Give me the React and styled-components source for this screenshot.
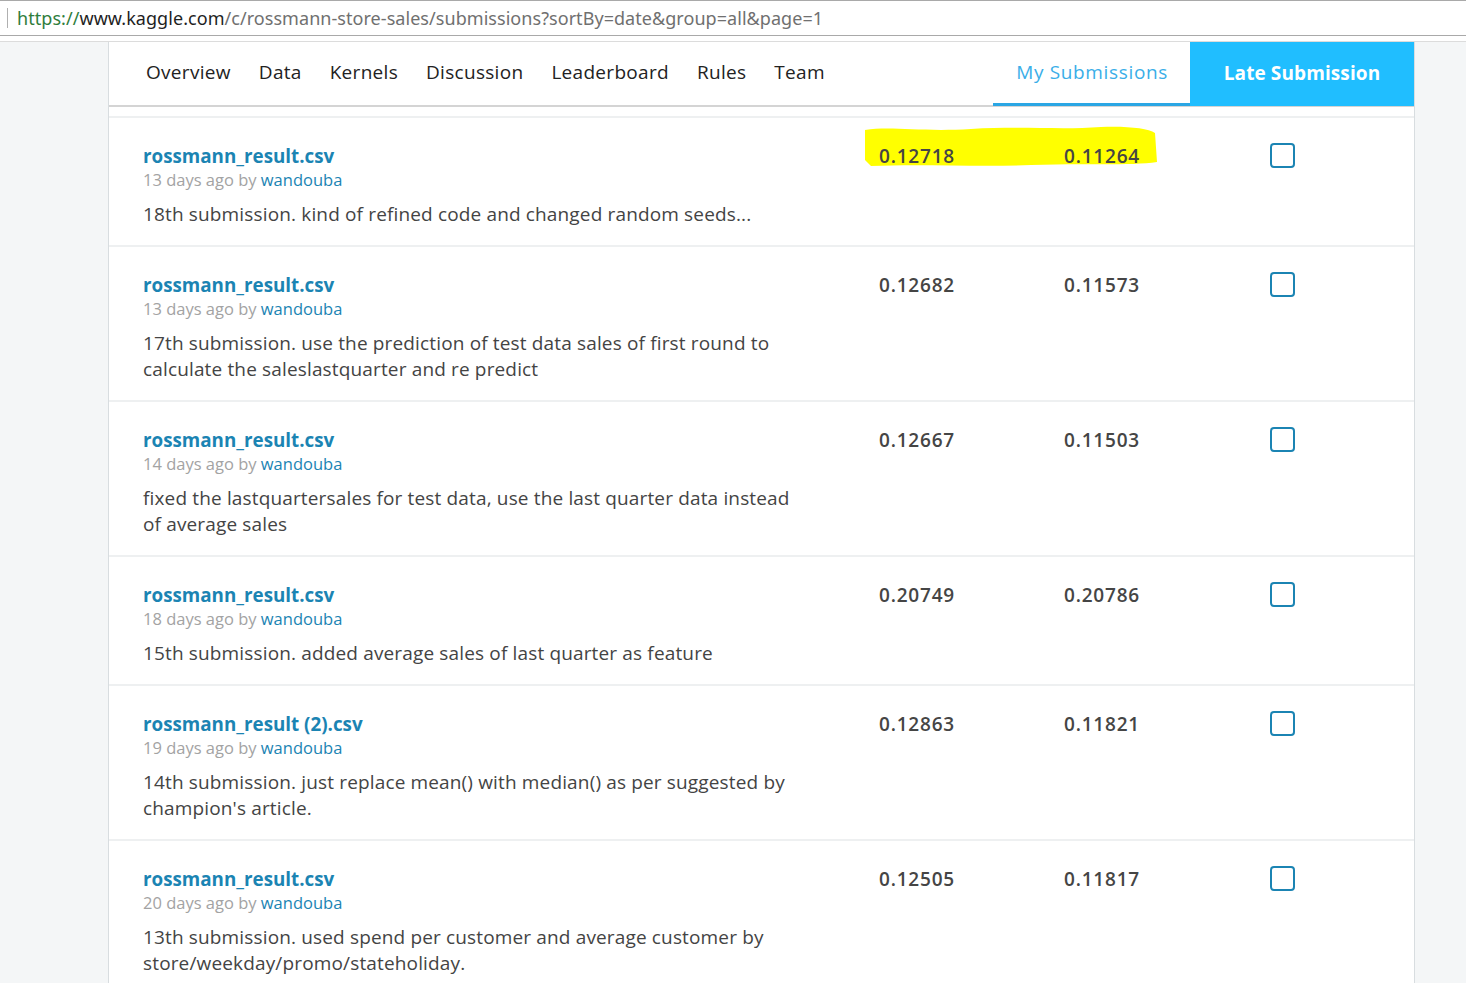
import React from "react";
import styled, { createGlobalStyle } from "styled-components";

const GlobalStyle = createGlobalStyle`
  body {
    margin: 0;
    background: #f4f6f7;
    font-family: "Open Sans", "Liberation Sans", sans-serif;
    overflow: hidden;
  }
`;

const AddressBar = styled.div`
  height: 34px;
  background: #fff;
  border-top: 1px solid #a9a9a9;
  border-bottom: 1px solid #a9a9a9;
  display: flex;
  align-items: center;
  padding-left: 7px;
  font-family: "Noto Sans", "Open Sans", sans-serif;
  font-size: 18px;
  letter-spacing: 0.05px;
  color: #707070;
  .caret {
    width: 1px;
    height: 20px;
    background: #b0b0b0;
    margin-right: 9px;
  }
  .scheme {
    color: #2f7d3c;
  }
  .host {
    color: #1f1f1f;
  }
`;

const Gap = styled.div`
  height: 5px;
  background: #fff;
  border-bottom: 1px solid #dcdcdc;
`;

const Card = styled.div`
  margin-left: 108px;
  width: 1305px;
  background: #fff;
  border-left: 1px solid #d8dde0;
  border-right: 1px solid #d8dde0;
  min-height: 960px;
`;

const Nav = styled.div`
  display: flex;
  align-items: stretch;
  height: 63px;
  border-bottom: 2px solid #d4d4d4;
  padding-left: 23px;
`;

const Tab = styled.div`
  display: flex;
  align-items: center;
  padding: 0 14px 3px;
  font-size: 19px;
  color: #222;
  letter-spacing: 0.3px;
`;

const Spacer = styled.div`
  flex: 1;
`;

const SubTab = styled.div`
  display: flex;
  align-items: center;
  padding: 0 22px 1px 23px;
  font-size: 19px;
  color: #3aaee8;
  letter-spacing: 0.65px;
  border-bottom: 3px solid #2aa6e4;
  margin-bottom: -1px;
`;

const LateButton = styled.div`
  display: flex;
  align-items: center;
  justify-content: center;
  width: 224px;
  padding-bottom: 3px;
  background: #20beff;
  color: #fff;
  font-size: 19px;
  font-weight: 700;
  letter-spacing: 0.1px;
  margin-bottom: -1px;
`;

const List = styled.div`
  margin-top: 9px;
  border-top: 2px solid #eef0f1;
  position: relative;
`;

const Row = styled.div`
  display: grid;
  grid-template-columns: 736px 185px 206px 1fr;
  padding: 26px 0 18px 34px;
  border-bottom: 2px solid #eef0f1;
  position: relative;
`;

const Info = styled.div`
  display: flex;
  flex-direction: column;
`;

const FileName = styled.div`
  font-size: 18.8px;
  font-weight: 700;
  color: #1b84b3;
  line-height: 24px;
`;

const Meta = styled.div`
  font-size: 16.5px;
  color: #a3a3a3;
  line-height: 24px;
  span {
    color: #1b84b3;
  }
`;

const Desc = styled.div`
  margin-top: 9px;
  font-size: 19px;
  color: #444;
  line-height: 26px;
  max-width: 660px;
  letter-spacing: 0.15px;
`;

const Score = styled.div`
  font-size: 19px;
  font-weight: 600;
  color: #454545;
  line-height: 24px;
  letter-spacing: 0.8px;
  position: relative;
  z-index: 1;
`;

const Check = styled.div`
  width: 21px;
  height: 21px;
  border: 2.5px solid #1b84b3;
  border-radius: 4px;
  margin-top: -1px;
`;

const Highlight = styled.svg`
  position: absolute;
  left: 752px;
  top: 6px;
  z-index: 0;
`;

const rows = [
  {
    file: "rossmann_result.csv",
    when: "13 days ago",
    desc: "18th submission. kind of refined code and changed random seeds...",
    a: "0.12718",
    b: "0.11264",
    marked: true,
  },
  {
    file: "rossmann_result.csv",
    when: "13 days ago",
    desc:
      "17th submission. use the prediction of test data sales of first round to calculate the saleslastquarter and re predict",
    a: "0.12682",
    b: "0.11573",
  },
  {
    file: "rossmann_result.csv",
    when: "14 days ago",
    desc:
      "fixed the lastquartersales for test data, use the last quarter data instead of average sales",
    a: "0.12667",
    b: "0.11503",
  },
  {
    file: "rossmann_result.csv",
    when: "18 days ago",
    desc: "15th submission. added average sales of last quarter as feature",
    a: "0.20749",
    b: "0.20786",
  },
  {
    file: "rossmann_result (2).csv",
    when: "19 days ago",
    desc:
      "14th submission. just replace mean() with median() as per suggested by champion's article.",
    a: "0.12863",
    b: "0.11821",
  },
  {
    file: "rossmann_result.csv",
    when: "20 days ago",
    desc:
      "13th submission. used spend per customer and average customer by store/weekday/promo/stateholiday.",
    a: "0.12505",
    b: "0.11817",
  },
];

const tabs = ["Overview", "Data", "Kernels", "Discussion", "Leaderboard", "Rules", "Team"];

export default function App() {
  return (
    <>
      <GlobalStyle />
      <AddressBar>
        <div className="caret" />
        <span className="scheme">https://</span>
        <span className="host">www.kaggle.com</span>
        <span>/c/rossmann-store-sales/submissions?sortBy=date&amp;group=all&amp;page=1</span>
      </AddressBar>
      <Gap />
      <Card>
        <Nav>
          {tabs.map((t) => (
            <Tab key={t}>{t}</Tab>
          ))}
          <Spacer />
          <SubTab>My Submissions</SubTab>
          <LateButton>Late Submission</LateButton>
        </Nav>
        <List>
          {rows.map((r, i) => (
            <Row key={i}>
              {r.marked && (
                <Highlight width="298" height="46" viewBox="0 0 298 46">
                  <path
                    d="M4 6 C30 2 60 8 110 5 C160 2 200 6 240 3 C265 2 287 4 294 9 L296 38 C270 42 220 39 170 41 C120 43 60 40 10 42 L4 36 Z"
                    fill="#ffff00"
                  />
                </Highlight>
              )}
              <Info>
                <FileName>{r.file}</FileName>
                <Meta>
                  {r.when} by <span>wandouba</span>
                </Meta>
                <Desc>{r.desc}</Desc>
              </Info>
              <Score>{r.a}</Score>
              <Score>{r.b}</Score>
              <div>
                <Check />
              </div>
            </Row>
          ))}
        </List>
      </Card>
    </>
  );
}
